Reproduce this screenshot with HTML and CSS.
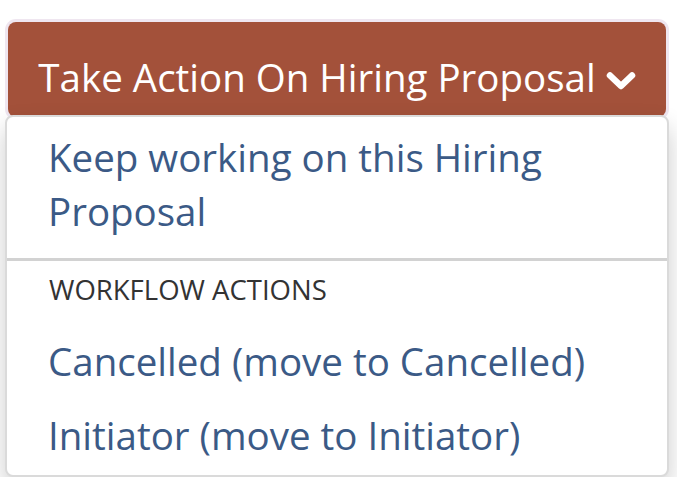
FILE: index.html
```html
<!DOCTYPE html>
<html lang="en">
<head>
    <meta charset="UTF-8">
    <meta name="viewport" content="width=device-width, initial-scale=1.0">
    <title>Take Action</title>
    <link rel="stylesheet" href="styles.css">
</head>
<body>
    <div class="action-group">
        <button class="action-toggle" type="button">
            Take Action On Hiring Proposal
            <svg class="caret" viewBox="0 0 30 20" width="30" height="20" aria-hidden="true">
                <path d="M4 4.5 L15 15 L26 4.5" fill="none" stroke="#fff" stroke-width="6.5" stroke-linecap="round" stroke-linejoin="round"/>
            </svg>
        </button>
        <ul class="action-menu">
            <li><a href="#">Keep working on this Hiring Proposal</a></li>
            <li class="divider"></li>
            <li class="menu-header">WORKFLOW ACTIONS</li>
            <li><a href="#">Cancelled (move to Cancelled)</a></li>
            <li class="last"><a href="#">Initiator (move to Initiator)</a></li>
        </ul>
    </div>
</body>
</html>
```

FILE: styles.css
```css
*{margin: 0; padding: 0; box-sizing: border-box;}
body{background: #fff; font-family: "Open Sans", "Liberation Sans", sans-serif;}
.action-group{padding: 22px 11px 0 8px;}
.action-toggle{width: 100%; height: 95px; display: flex; align-items: center; justify-content: center; gap: 10px; background-color: #a3513a; color: #fff; font-family: inherit; font-size: 38.5px; border: none; border-radius: 8px; box-shadow: 0 0 0 3px #efe6f0; cursor: pointer; padding-top: 14px;}
.caret{margin-top: 9px; flex-shrink: 0;}
.action-menu{list-style: none; margin: -2px -3px 0 -3px; background: #fff; border: 2px solid #dadada; border-radius: 8px; box-shadow: 0 12px 24px rgba(0, 0, 0, 0.2); padding: 3px 0 0; position: relative;}
.action-menu li a{display: block; padding: 10px 41px; font-size: 38.5px; line-height: 54px; color: #3b5a86; text-decoration: none;}
.action-menu li.last a{padding-bottom: 13px;}
.divider{height: 3px; background: #d2d2d2; margin: 10px 0 11px;}
.menu-header{padding: 0 42px 16px; font-size: 27.5px; line-height: 36px; color: #333;}
```
